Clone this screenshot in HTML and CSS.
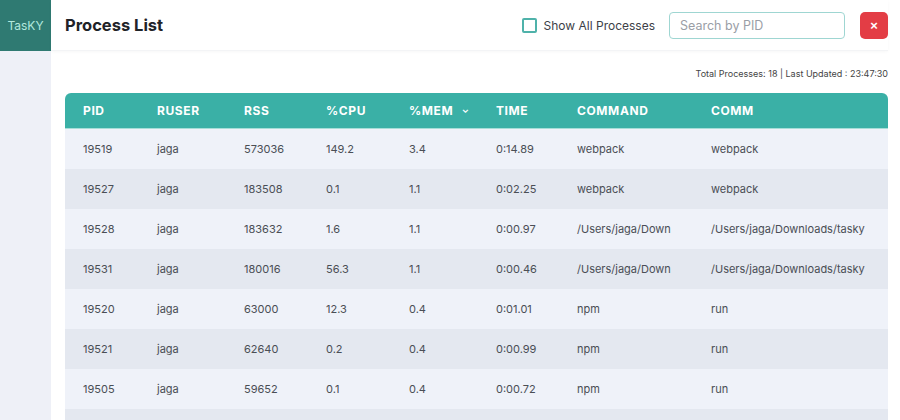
FILE: index.html
```html
<!DOCTYPE html>
<html>
<head>
	<title>TasKY</title>
	<link rel="stylesheet" href="styles.css">
</head>
<body>
	<div class="app">
		<aside class="sidebar">
			<div class="brand">TasKY</div>
		</aside>
		<main class="main">
			<header class="topbar">
				<h1>Process List</h1>
				<div class="controls">
					<label class="check">
						<span class="box"></span>
						Show All Processes
					</label>
					<input class="search" type="text" placeholder="Search by PID">
					<button class="close">&times;</button>
				</div>
			</header>
			<div class="content">
				<p class="status">Total Processes: 18 | Last Updated : 23:47:30</p>
				<table class="procs">
					<thead>
						<tr>
							<th class="c-pid">PID</th>
							<th class="c-user">RUSER</th>
							<th class="c-rss">RSS</th>
							<th class="c-cpu">%CPU</th>
							<th class="c-mem">%MEM <span class="caret">&#8964;</span></th>
							<th class="c-time">TIME</th>
							<th class="c-cmd">COMMAND</th>
							<th>COMM</th>
						</tr>
					</thead>
					<tbody>
						<tr><td>19519</td><td>jaga</td><td>573036</td><td>149.2</td><td>3.4</td><td>0:14.89</td><td>webpack</td><td>webpack</td></tr>
						<tr><td>19527</td><td>jaga</td><td>183508</td><td>0.1</td><td>1.1</td><td>0:02.25</td><td>webpack</td><td>webpack</td></tr>
						<tr><td>19528</td><td>jaga</td><td>183632</td><td>1.6</td><td>1.1</td><td>0:00.97</td><td>/Users/jaga/Down</td><td>/Users/jaga/Downloads/tasky</td></tr>
						<tr><td>19531</td><td>jaga</td><td>180016</td><td>56.3</td><td>1.1</td><td>0:00.46</td><td>/Users/jaga/Down</td><td>/Users/jaga/Downloads/tasky</td></tr>
						<tr><td>19520</td><td>jaga</td><td>63000</td><td>12.3</td><td>0.4</td><td>0:01.01</td><td>npm</td><td>run</td></tr>
						<tr><td>19521</td><td>jaga</td><td>62640</td><td>0.2</td><td>0.4</td><td>0:00.99</td><td>npm</td><td>run</td></tr>
						<tr><td>19505</td><td>jaga</td><td>59652</td><td>0.1</td><td>0.4</td><td>0:00.72</td><td>npm</td><td>run</td></tr>
						<tr><td></td><td></td><td></td><td></td><td></td><td></td><td></td><td></td></tr>
					</tbody>
				</table>
			</div>
		</main>
	</div>
</body>
</html>
```

FILE: styles.css
```css
html,
body {
	margin: 0;
	height: 100%;
	overflow: hidden;
}

body {
	font-family: Inter, "Noto Sans", sans-serif;
	background: #fff;
	color: #222;
}

.app {
	display: flex;
	height: 420px;
}

.sidebar {
	width: 51px;
	flex-shrink: 0;
	background: #eef0f7;
}

.brand {
	height: 51px;
	background: #2f7a72;
	color: #b2e8de;
	font-size: 12px;
	display: flex;
	align-items: center;
	justify-content: center;
}

.main {
	flex: 1;
	background: #fff;
	padding-right: 12px;
}

.topbar {
	height: 50px;
	display: flex;
	align-items: center;
	justify-content: space-between;
	padding-left: 14px;
	border-bottom: 1px solid #f3f4f6;
	box-shadow: 0 1px 3px rgba(0, 0, 0, 0.03);
}

.topbar h1 {
	margin: 0;
	font-size: 16.5px;
	font-weight: 700;
	color: #1f2328;
}

.controls {
	display: flex;
	align-items: center;
}

.check {
	display: flex;
	align-items: center;
	gap: 7px;
	font-size: 12px;
	color: #3d4148;
	margin-right: 14px;
}

.box {
	width: 11px;
	height: 11px;
	border: 2px solid #4fb2aa;
	border-radius: 2px;
}

.search {
	width: 176px;
	height: 27px;
	box-sizing: border-box;
	border: 1px solid #9fd6d2;
	border-radius: 4px;
	padding: 0 10px;
	font-family: inherit;
	font-size: 12.5px;
	color: #333;
}

.search::placeholder {
	color: #9a9ea6;
}

.close {
	margin-left: 15px;
	width: 28px;
	height: 27px;
	border: none;
	border-radius: 5px;
	background: #e33d45;
	color: #fff;
	font-size: 13px;
	font-weight: 700;
	padding: 0;
}

.content {
	padding-left: 14px;
}

.status {
	margin: 17px 0 14px;
	text-align: right;
	font-size: 9px;
	color: #444;
}

.procs {
	width: 100%;
	border-collapse: separate;
	border-spacing: 0;
	font-size: 11px;
}

.procs th {
	background: #3ab0a6;
	color: #fff;
	font-size: 12px;
	font-weight: 700;
	letter-spacing: 0.6px;
	text-align: left;
	height: 35px;
	padding: 0 0 0 18px;
	border-bottom: 1px solid #a6ded8;
}

.procs th:first-child {
	border-top-left-radius: 6px;
}

.procs th:last-child {
	border-top-right-radius: 6px;
}

.caret {
	font-size: 9px;
	margin-left: 5px;
	position: relative;
	top: -2px;
}

.c-pid { width: 56px; }
.c-user { width: 69px; }
.c-rss { width: 64px; }
.c-cpu { width: 65px; }
.c-mem { width: 69px; }
.c-time { width: 63px; }
.c-cmd { width: 116px; }

.procs td {
	height: 40px;
	padding: 0 0 0 18px;
	color: #4a4e55;
	white-space: nowrap;
}

.procs tbody tr:nth-child(odd) td {
	background: #eff2f9;
}

.procs tbody tr:nth-child(even) td {
	background: #e4e8f0;
}
```
